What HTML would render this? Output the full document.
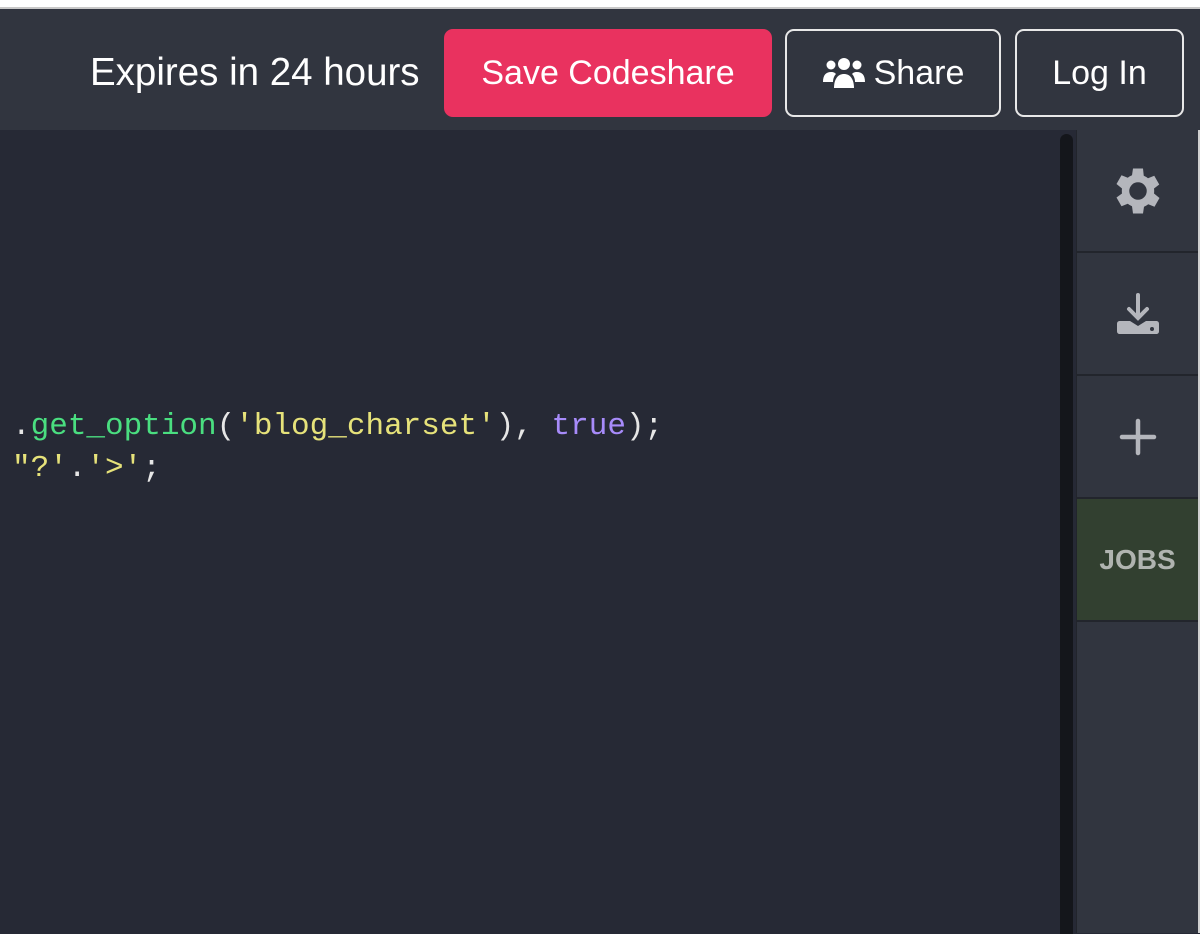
<!DOCTYPE html>
<html><head><style>
*{margin:0;padding:0;box-sizing:border-box}
body{width:1200px;height:933px;overflow:hidden;background:#262935;font-family:"Liberation Sans",sans-serif;position:relative}
.top{position:absolute;left:0;top:0;width:1200px;height:9px;background:#fff;border-bottom:2px solid #c8c8c8}
.hdr{position:absolute;left:0;top:9px;width:1200px;height:121px;background:#31353f}
.exp{position:absolute;left:90px;top:53px;color:#fff;font-size:38.5px;line-height:40px;white-space:nowrap}
.btn{position:absolute;top:29px;height:88px;border-radius:9px;color:#fff;font-size:34px;display:flex;align-items:center;justify-content:center}
.save{left:444px;width:328px;background:#e9325f}
.sh{left:785px;width:216px;border:2px solid #e8e8e8}
.li{left:1015px;width:169px;border:2px solid #e8e8e8}
.code{position:absolute;left:12px;top:406px;font-family:"Liberation Mono",monospace;font-size:31px;line-height:42px;color:#e6e6e6;white-space:pre}
.g{color:#4ade80}.y{color:#e6e27a}.p{color:#a78bfa}
.sb{position:absolute;left:1060px;top:134px;width:13px;height:800px;background:#14161b;border-radius:7px 7px 0 0}
.side{position:absolute;left:1076px;top:130px;width:122px;height:803px;background:#31353f;border-left:1px solid #22252c}
.cell{height:123px;border-bottom:2px solid #22252c;display:flex;align-items:center;justify-content:center}
.jobs{background:#324030;color:#b0b4b0;font-weight:bold;font-size:28px}
.edge{position:absolute;left:1198px;top:130px;width:2px;height:803px;background:#d0d0d0}
</style></head><body>
<div class="top"></div>
<div class="hdr"></div>
<div class="exp">Expires in 24 hours</div>
<div class="btn save">Save Codeshare</div>
<div class="btn sh"><svg width="44" height="34" viewBox="0 0 44 34" style="margin-right:8px"><circle cx="22" cy="8" r="6" fill="#fff"/><circle cx="9" cy="9" r="4.5" fill="#fff"/><circle cx="35" cy="9" r="4.5" fill="#fff"/><path d="M12 32c0-9 4-14 10-14s10 5 10 14z" fill="#fff"/><path d="M1 26c0-7 3-10 8-10 3 0 4 1 5 2-2 2-3 5-3 8z" fill="#fff"/><path d="M43 26c0-7-3-10-8-10-3 0-4 1-5 2 2 2 3 5 3 8z" fill="#fff"/></svg>Share</div>
<div class="btn li">Log In</div>
<div class="code"><span>.</span><span class="g">get_option</span>(<span class="y">'blog_charset'</span>), <span class="p">true</span>);
<span class="y">"?'</span>.<span class="y">'&gt;'</span>;</div>
<div class="sb"></div>
<div class="side">
<div class="cell"><svg width="50" height="50" viewBox="3 2 20 20"><path fill="#b4b6bc" d="M19.4 13a7.5 7.5 0 000-2l2.1-1.6-2-3.5-2.5 1a7 7 0 00-1.7-1L15 3h-4l-.4 2.7a7 7 0 00-1.7 1l-2.5-1-2 3.5L6.6 11a7.5 7.5 0 000 2l-2.2 1.6 2 3.5 2.5-1a7 7 0 001.7 1L11 21h4l.4-2.7a7 7 0 001.7-1l2.5 1 2-3.5zM13 15.5a3.5 3.5 0 110-7 3.5 3.5 0 010 7z"/></svg></div>
<div class="cell"><svg width="46" height="46" viewBox="0 0 46 46"><path d="M23 4v22M14 18l9 9 9-9" stroke="#b4b6bc" stroke-width="4" fill="none" stroke-linecap="round"/><path d="M2 33c0-2 1-3 3-3h10l8 5 8-5h10c2 0 3 1 3 3v7c0 2-1 3-3 3H5c-2 0-3-1-3-3z" fill="#b4b6bc"/><circle cx="37" cy="38" r="2" fill="#31353f"/></svg></div>
<div class="cell"><svg width="38" height="38" viewBox="0 0 38 38"><path d="M19 3v32M3 19h32" stroke="#b4b6bc" stroke-width="4.5" stroke-linecap="round"/></svg></div>
<div class="cell jobs">JOBS</div>
</div>
<div class="edge"></div>
</body></html>
